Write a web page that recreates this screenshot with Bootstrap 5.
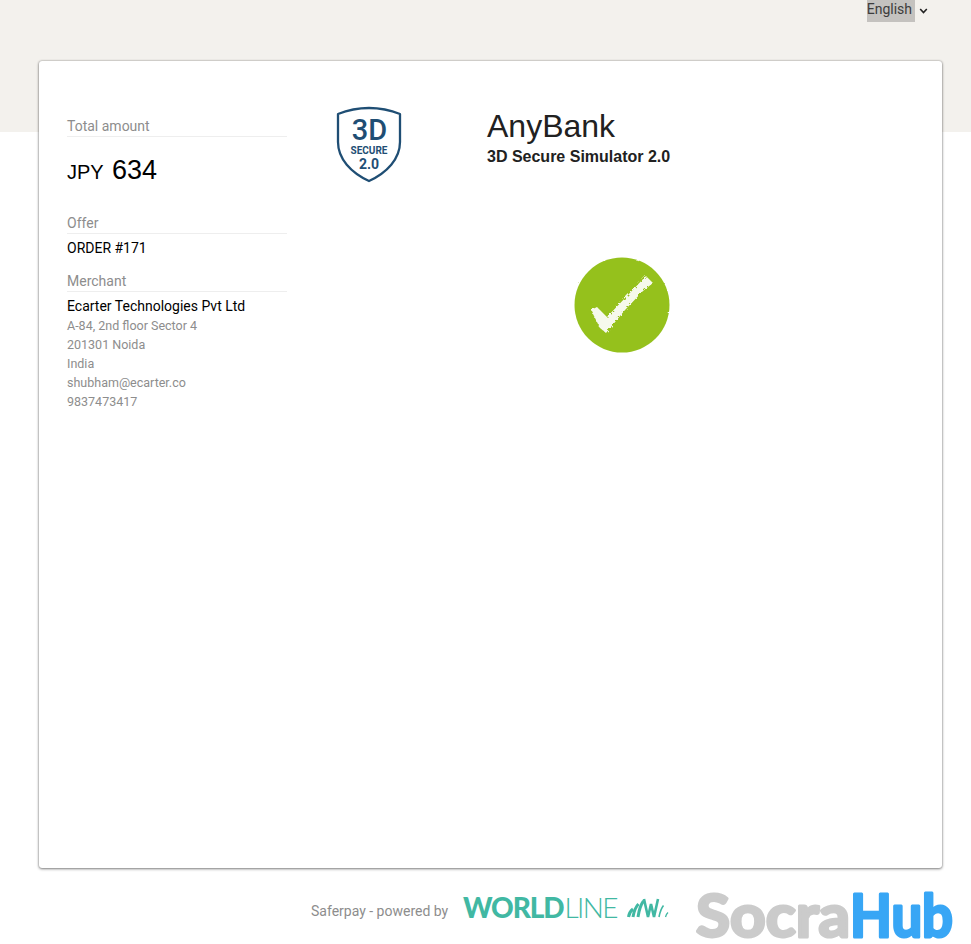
<!DOCTYPE html>
<html lang="en">
<head>
<meta charset="utf-8">
<title>3D Secure Simulator</title>
<link href="https://cdn.jsdelivr.net/npm/bootstrap@5.3.0/dist/css/bootstrap.min.css" rel="stylesheet">
<style>
html,body{height:944px;overflow:hidden}
body{font-family:Roboto,sans-serif;background:linear-gradient(#f3f1ed 132px,#fff 132px);color:#000}
.top-lang{height:61px;padding-right:43px}
.lang-label{background:#c4c2bf;color:#3c3c3c;font-size:14px;line-height:19px;height:22px;padding:0 3px 0 0}
.lang-arrow{margin:0 0 0 4px;width:9px;height:22px}
.sheet{margin:0 29px 0 39px;width:903px;height:807px;background:#fff;border-radius:3px;box-shadow:0 1px 3px rgba(0,0,0,.45),0 0 2px rgba(0,0,0,.35);padding:44px 28px 0 28px}
.side-col{width:220px;flex:none;padding-top:11px}
.side-label{font-size:14px;line-height:20px;color:#8d8d8d;border-bottom:1px solid #eeeeee;height:21px}
.side-amount{font-family:"Liberation Sans",sans-serif;height:76px;padding-top:14px;font-size:20px;line-height:38px}
.side-amount b{font-weight:400;font-size:27px;margin-left:3px}
.side-main{font-size:14px;line-height:20px;margin-top:4px;height:20px}
.side-gap{margin-top:13px}
.side-sub{font-size:12.5px;line-height:19px;color:#8d8d8d}
.badge-col{width:200px;flex:none;padding-left:49px}
.bank-name{font-family:"Liberation Sans",sans-serif;font-size:32px;line-height:38px;color:#212121;margin:2px 0 0;font-weight:400}
.bank-sub{font-family:"Liberation Sans",sans-serif;font-size:16px;line-height:22px;font-weight:700;color:#212121;margin:1px 0 0}
.status-wrap{margin-top:88px;padding-left:86px}
.foot-row{padding:16px 0 0 311px;height:75px}
.foot-text{font-size:14px;color:#8d8d8d;width:152px;flex:none;line-height:20px;margin-top:17px;white-space:nowrap}
.wl-wrap{width:232px;flex:none;height:28px;margin-top:9px}
.wl-word{font-family:Lato,sans-serif;font-size:28px;line-height:28px;color:#41b8a3;letter-spacing:-1.1px;font-weight:900;white-space:nowrap;width:164px}
.wl-word span{font-weight:300;letter-spacing:-1.6px;margin-left:1px}
.socra-logo{flex:none;margin-left:1px}
.socra-logo text{font-family:Lato,sans-serif;font-weight:700;font-size:60px;stroke-width:3;stroke-linejoin:round}
.socra-grey{fill:#cbcbcb;stroke:#cbcbcb}
.socra-blue{fill:#38a6f5;stroke:#38a6f5}
</style>
</head>
<body>
<div class="top-lang d-flex justify-content-end align-items-start">
  <span class="lang-label">English</span>
  <svg class="lang-arrow" viewBox="0 0 9 22"><path d="M1.200 9 4.500 12.500 7.800 9" fill="none" stroke="#222" stroke-width="1.600"/></svg>
</div>
<div class="sheet d-flex">
  <div class="side-col">
    <div class="side-label">Total amount</div>
    <div class="side-amount">JPY <b>634</b></div>
    <div class="side-label">Offer</div>
    <div class="side-main">ORDER #171</div>
    <div class="side-label side-gap">Merchant</div>
    <div class="side-main">Ecarter Technologies Pvt Ltd</div>
    <div class="side-sub">A-84, 2nd floor Sector 4</div>
    <div class="side-sub">201301 Noida</div>
    <div class="side-sub">India</div>
    <div class="side-sub">shubham@ecarter.co</div>
    <div class="side-sub">9837473417</div>
  </div>
  <div class="badge-col">
    <svg width="66" height="78" viewBox="0 0 66 78" class="d-block">
      <path d="M33 3C44 3 54 5 64 9V37C64 54 51 67.500 33 76C15 67.500 2 54 2 37V9C12 5 22 3 33 3Z" fill="#fff" stroke="#1f4e74" stroke-width="2.300" stroke-linejoin="round"/>
      <text x="33.500" y="35" text-anchor="middle" font-family="Roboto,sans-serif" font-weight="500" font-size="29" fill="#1f4e74">3D</text>
      <text x="33" y="49" text-anchor="middle" font-family="Roboto,sans-serif" font-weight="700" font-size="10" fill="#1f4e74">SECURE</text>
      <text x="33" y="64" text-anchor="middle" font-family="Roboto,sans-serif" font-weight="700" font-size="14" fill="#1f4e74">2.0</text>
    </svg>
  </div>
  <div class="flex-grow-1">
    <h1 class="bank-name">AnyBank</h1>
    <p class="bank-sub">3D Secure Simulator 2.0</p>
    <div class="status-wrap">
      <svg width="98" height="98" viewBox="0 0 98 98" class="d-block" role="img" aria-label="Success">
        <defs>
          <filter id="rough" x="-10%" y="-10%" width="120%" height="120%">
            <feTurbulence type="fractalNoise" baseFrequency=".4" numOctaves="2" seed="4"/>
            <feDisplacementMap in="SourceGraphic" scale="4"/>
          </filter>
          <filter id="edge" x="-5%" y="-5%" width="110%" height="110%">
            <feTurbulence type="fractalNoise" baseFrequency=".12" numOctaves="2" seed="7"/>
            <feDisplacementMap in="SourceGraphic" scale="2"/>
          </filter>
        </defs>
        <circle cx="49" cy="49" r="47.500" fill="#95c11f" filter="url(#edge)"/>
        <path d="M18 54 24 51 34 61 73 20 80 27 70 35 52 54 33 77 27 72Z" fill="#f6f9ec" filter="url(#rough)"/>
      </svg>
    </div>
  </div>
</div>
<div class="foot-row d-flex">
  <div class="foot-text">Saferpay - powered by</div>
  <div class="wl-wrap d-flex align-items-center">
    <div class="wl-word">WORLD<span>LINE</span></div>
    <svg width="42" height="22" viewBox="0 0 42 22" fill="none" stroke="#41b8a3">
      <path d="M1.500 21C2 17.500 3.500 15 6 13" stroke-width="3"/>
      <path d="M6 21C7 15 8.500 11 11.500 8" stroke-width="3"/>
      <path d="M11 21C12 14 13.500 9 16.500 5" stroke-width="3"/>
      <path d="M17 3 21 21 24 8 27 21 31 3" stroke-width="2.600"/>
      <path d="M32 21C33 16 34 12.500 36.500 9.500" stroke-width="1.600"/>
      <path d="M38.500 21C39 19 39.800 17.500 41 16.500" stroke-width="1.300"/>
    </svg>
  </div>
  <svg class="socra-logo" width="260" height="59" viewBox="0 0 260 59">
    <text x="0" y="52.500" class="socra-grey" textLength="154" lengthAdjust="spacingAndGlyphs">Socra</text>
    <text x="154" y="52.500" class="socra-blue" textLength="103" lengthAdjust="spacingAndGlyphs">Hub</text>
  </svg>
</div>
<script src="https://cdn.jsdelivr.net/npm/bootstrap@5.3.0/dist/js/bootstrap.bundle.min.js"></script>
</body>
</html>
